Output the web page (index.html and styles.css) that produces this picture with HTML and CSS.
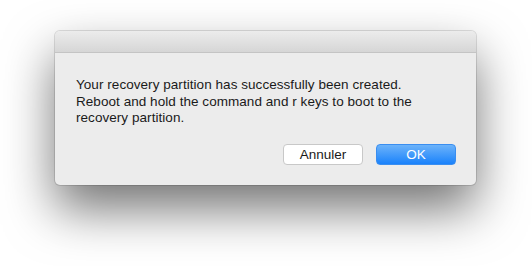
FILE: index.html
```html
<!DOCTYPE html>
<html>
<head>
<meta charset="utf-8">
<link rel="stylesheet" href="styles.css">
</head>
<body>
<div class="stage">
  <div class="dialog">
    <div class="titlebar"></div>
    <div class="content">
      <p class="message">Your recovery partition has successfully been created.<br>Reboot and hold the command and r keys to boot to the<br>recovery partition.</p>
      <div class="actions">
        <button class="btn btn-cancel">Annuler</button>
        <button class="btn btn-ok">OK</button>
      </div>
    </div>
  </div>
</div>
</body>
</html>
```
FILE: styles.css
```css
html, body {
  margin: 0;
  padding: 0;
  background: #ffffff;
  width: 532px;
  height: 266px;
  overflow: hidden;
}
.stage {
  padding: 31px 0 0 55px;
}
.dialog {
  width: 421px;
  height: 154px;
  border-radius: 5px;
  background: #ececec;
  box-shadow: 0 0 0 1px rgba(0,0,0,0.12), 0 24px 50px rgba(0,0,0,0.55);
  overflow: hidden;
  display: flex;
  flex-direction: column;
  font-family: "Liberation Sans", Arial, sans-serif;
}
.titlebar {
  height: 22px;
  box-sizing: border-box;
  background: linear-gradient(#ececec, #d6d6d6);
  border-bottom: 1px solid #c4c4c4;
  flex: none;
}
.content {
  flex: 1;
  display: flex;
  flex-direction: column;
  padding: 24px 20px 20px 21px;
}
.message {
  margin: 0;
  font-size: 13.5px;
  letter-spacing: 0.05px;
  line-height: 16.5px;
  color: #1a1a1a;
}
.actions {
  margin-top: auto;
  display: flex;
  justify-content: flex-end;
  gap: 13px;
}
.btn {
  height: 21px;
  width: 80px;
  border-radius: 4px;
  font-family: "Liberation Sans", Arial, sans-serif;
  font-size: 13.5px;
  padding: 0;
  line-height: 19px;
}
.btn-cancel {
  background: #ffffff;
  border: 1px solid #c8c8c8;
  color: #1a1a1a;
}
.btn-ok {
  background: linear-gradient(#6cb3fa, #1a82fb);
  border: 1px solid #3a8ef0;
  color: #ffffff;
}
```
